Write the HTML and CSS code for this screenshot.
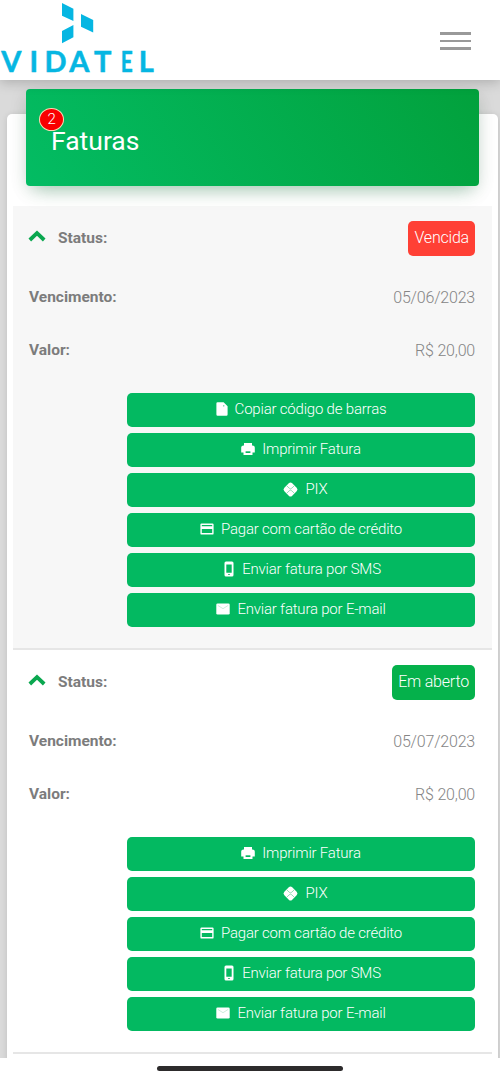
FILE: index.html
```html
<!DOCTYPE html>
<html lang="pt-BR">

<head>
    <meta charset="UTF-8">
    <meta name="viewport" content="width=device-width, initial-scale=1.0">
    <title>Vidatel - Faturas</title>
    <link rel="stylesheet" href="styles.css">
</head>

<body>
    <!-- icons -->
    <svg class="sprite" width="0" height="0">
        <symbol id="up" viewBox="0 0 18 12">
            <path d="M1.800 10 9 3.200l7.200 6.800" fill="none" stroke="currentColor" stroke-width="3.800" />
        </symbol>
        <symbol id="file" viewBox="0 0 12 14">
            <path d="M1.500.3H7.600L11.600 4.300V12.500a1.200 1.200 0 0 1-1.200 1.200H1.600A1.200 1.200 0 0 1 .4 12.500V1.500A1.200 1.200 0 0 1 1.500.3z" />
            <circle cx="7.800" cy="3.800" r=".6" fill="#03b961" />
        </symbol>
        <symbol id="print" viewBox="0 0 14 14">
            <path d="M3 1h8v2.600H3zM2.600 3.400h8.800A2.400 2.400 0 0 1 13.800 6v4.600H11.500V13h-9v-2.400H.2V6a2.400 2.400 0 0 1 2.400-2.600z" />
            <path d="M4.600 9.300h4.800v1.700H4.600z" fill="#03b961" />
        </symbol>
        <symbol id="pix" viewBox="0 0 18 18">
            <rect x="3.100" y="3.100" width="11.800" height="11.800" rx="2.600" transform="rotate(45 9 9)" />
            <path d="M4.600 4.600l3 3q1.400 1.400 2.800 0l3-3M4.600 13.400l3-3q1.400-1.400 2.800 0l3 3" fill="none" stroke="#6fd3a0" stroke-width=".8" />
        </symbol>
        <symbol id="card" viewBox="0 0 14 12">
            <path fill-rule="evenodd" d="M1.600.4h10.800a1.200 1.200 0 0 1 1.200 1.200v8.800a1.200 1.200 0 0 1-1.200 1.200H1.600A1.200 1.200 0 0 1 .4 10.400V1.600A1.200 1.200 0 0 1 1.600.4zM1.800 1.900v1.300h10.400V1.900zM1.800 5.900v4.200h10.400V5.900z" />
        </symbol>
        <symbol id="phone" viewBox="0 0 10 16">
            <path fill-rule="evenodd" d="M2 .6h6a1.500 1.500 0 0 1 1.500 1.500v11.800A1.500 1.500 0 0 1 8 15.400H2A1.500 1.500 0 0 1 .5 13.900V2.100A1.500 1.500 0 0 1 2 .6zM2.300 3.400v8.400h5.400V3.400zM4 13.200v.8h2v-.8z" />
        </symbol>
        <symbol id="mail" viewBox="0 0 14 12">
            <rect x=".3" y=".5" width="13.400" height="11" rx="1.300" />
            <path d="M1.800 2.400 7 5.700l5.200-3.300" fill="none" stroke="#b5e6cb" stroke-width=".7" />
        </symbol>
    </svg>

    <header class="navbar">
        <svg class="logo" width="156" height="76" viewBox="0 0 156 76">
            <path d="M62 3 73.400 8.700V21L62 15.800zM81 14 93.200 20V32.600L81 26.800zM73.400 25V37.300L62 43.300V31z" />
            <text x="1.200 29.600 44.600 69.300 94" y="71.500">VIDAT</text>
            <text x="120.800" y="71.500" textLength="12" lengthAdjust="spacingAndGlyphs">E</text>
            <text x="138.800" y="71.500">L</text>
        </svg>
        <button class="menu" aria-label="Menu">
            <span></span>
            <span></span>
            <span></span>
        </button>
    </header>

    <main class="content">
        <section class="card">
            <div class="card-header">
                <h4>Faturas</h4>
                <span class="count">2</span>
            </div>

            <div class="list">
                <article class="invoice gray">
                    <div class="row status">
                        <strong><svg class="arrow"><use href="#up" /></svg>Status:</strong>
                        <span class="label danger">Vencida</span>
                    </div>
                    <div class="row"><strong>Vencimento:</strong><span>05/06/2023</span></div>
                    <div class="row"><strong>Valor:</strong><span>R$ 20,00</span></div>
                    <div class="actions">
                        <button class="btn"><svg width="12" height="14"><use href="#file" /></svg>Copiar código de barras</button>
                        <button class="btn"><svg width="14" height="14"><use href="#print" /></svg>Imprimir Fatura</button>
                        <button class="btn pix"><svg width="17" height="17"><use href="#pix" /></svg>PIX</button>
                        <button class="btn"><svg width="14" height="12"><use href="#card" /></svg>Pagar com cartão de crédito</button>
                        <button class="btn sms"><svg width="10" height="16"><use href="#phone" /></svg>Enviar fatura por SMS</button>
                        <button class="btn"><svg width="14" height="12"><use href="#mail" /></svg>Enviar fatura por E-mail</button>
                    </div>
                </article>

                <article class="invoice">
                    <div class="row status">
                        <strong><svg class="arrow"><use href="#up" /></svg>Status:</strong>
                        <span class="label success">Em aberto</span>
                    </div>
                    <div class="row"><strong>Vencimento:</strong><span>05/07/2023</span></div>
                    <div class="row"><strong>Valor:</strong><span>R$ 20,00</span></div>
                    <div class="actions">
                        <button class="btn"><svg width="14" height="14"><use href="#print" /></svg>Imprimir Fatura</button>
                        <button class="btn pix"><svg width="17" height="17"><use href="#pix" /></svg>PIX</button>
                        <button class="btn"><svg width="14" height="12"><use href="#card" /></svg>Pagar com cartão de crédito</button>
                        <button class="btn sms"><svg width="10" height="16"><use href="#phone" /></svg>Enviar fatura por SMS</button>
                        <button class="btn"><svg width="14" height="12"><use href="#mail" /></svg>Enviar fatura por E-mail</button>
                    </div>
                </article>
            </div>
        </section>
    </main>

    <div class="home-bar"><span></span></div>
</body>

</html>
```
FILE: styles.css
```css
* {
    box-sizing: border-box;
}

body {
    margin: 0;
    height: 1080px;
    overflow: hidden;
    display: flex;
    flex-direction: column;
    background-color: #fff;
    color: #858585;
    font-family: Roboto, "Liberation Sans", sans-serif;
    font-size: 16px;
    font-weight: 300;
    letter-spacing: -0.2px;
}

.sprite {
    position: absolute;
}

.navbar {
    position: relative;
    z-index: 1;
    flex: none;
    height: 80px;
    display: flex;
    justify-content: space-between;
    align-items: flex-start;
    background-color: #fff;
    box-shadow: 0 2px 12px rgba(0, 0, 0, 0.22);
}

.logo {
    fill: #06b6e2;
    font-family: Lato, sans-serif;
    font-size: 29px;
    font-weight: 700;
    letter-spacing: 0;
}

.logo text {
    stroke: #06b6e2;
    stroke-width: 0.5px;
}

.menu {
    width: 31px;
    margin: 32px 29px 0 0;
    padding: 0;
    border: 0;
    background: none;
    display: flex;
    flex-direction: column;
    gap: 5px;
}

.menu span {
    height: 2.7px;
    background-color: #999;
}

.content {
    flex: none;
    height: 978px;
    padding: 34px 2.5px 0 6.5px;
    background-color: #dadada;
    overflow: hidden;
}

.card {
    height: 1000px;
    padding: 0 6px 0 6.5px;
    background-color: #fff;
    border-radius: 5px;
    box-shadow: 0 1px 6px rgba(0, 0, 0, 0.12);
}

.card-header {
    position: relative;
    top: -25px;
    height: 97px;
    margin: 0 13px -5px;
    padding-left: 25px;
    display: flex;
    align-items: center;
    border-radius: 4px;
    background: linear-gradient(60deg, #03bc63, #02a13c);
    box-shadow: 0 10px 18px -8px rgba(0, 130, 55, 0.35), 0 4px 18px rgba(0, 0, 0, 0.1);
}

.card-header h4 {
    margin: 5px 0 0;
    color: #fff;
    font-size: 26.5px;
    font-weight: 400;
    letter-spacing: 0;
}

.count {
    position: absolute;
    left: 13px;
    top: 19px;
    width: 25px;
    height: 23px;
    border: 1px solid #ffd9b5;
    border-radius: 50%;
    background-color: #f90000;
    color: #fff;
    font-size: 15px;
    line-height: 21px;
    text-align: center;
}

.invoice {
    padding: 0 16.5px 21.5px 16px;
    border-bottom: 2px solid #e6e6e6;
}

.invoice.gray {
    background-color: #f7f7f7;
}

.row {
    height: 53px;
    display: flex;
    justify-content: space-between;
    align-items: center;
}

.row strong {
    display: flex;
    align-items: center;
    padding-bottom: 1px;
    color: #7c7c7c;
    font-size: 15.5px;
    font-weight: 700;
    letter-spacing: 0;
}

.row.status {
    height: 65px;
}

.row.status strong {
    padding-bottom: 2px;
}

.arrow {
    width: 18px;
    height: 12px;
    margin: 0 12px 4px -1px;
    color: #0aa74f;
}

.label {
    height: 35px;
    padding: 0 6px;
    border-radius: 5px;
    color: #fff;
    line-height: 34px;
}

.label.danger {
    background-color: #ff4035;
}

.label.success {
    background-color: #05b14b;
}

.actions {
    margin-left: 98px;
    padding-top: 16px;
    display: flex;
    flex-direction: column;
    gap: 6.5px;
}

.btn {
    height: 33.5px;
    padding: 0 0 1.5px;
    border: 0;
    border-radius: 5px;
    display: flex;
    justify-content: center;
    align-items: center;
    gap: 7px;
    background-color: #03b961;
    color: #fff;
    font-family: inherit;
    font-size: 15px;
    font-weight: 300;
    letter-spacing: -0.2px;
}

.btn svg {
    fill: #fff;
}

.btn.pix {
    padding-left: 7px;
}

.btn.sms {
    padding-left: 3px;
    gap: 8px;
}

.home-bar {
    height: 22px;
    display: flex;
    justify-content: center;
    padding-top: 8px;
}

.home-bar span {
    width: 186px;
    height: 5px;
    border-radius: 3px;
    background-color: #2d2b2c;
}
```
